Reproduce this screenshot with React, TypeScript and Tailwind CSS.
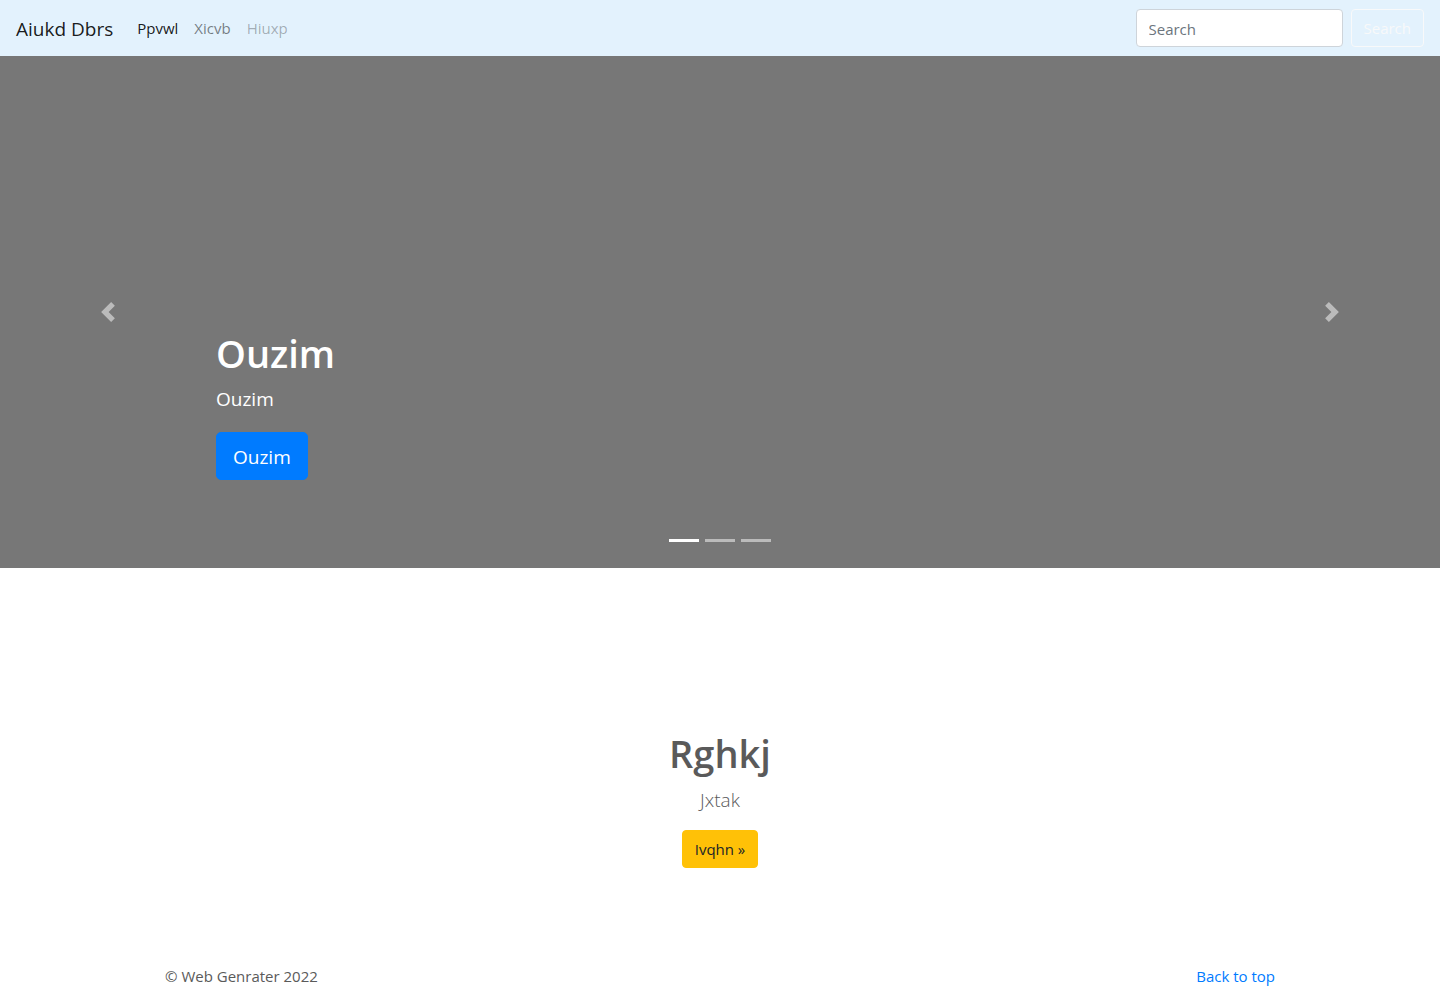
const slides = ["First slide", "Second slide", "Third slide"];

const navLinks = [
  { label: "Ppvwl", color: "text-black/90" },
  { label: "Xicvb", color: "text-black/50" },
  { label: "Hiuxp", color: "text-black/30" },
];

function Navbar() {
  return (
    <header>
      <nav className="flex h-14 items-center bg-[#e3f2fd] px-4" aria-label="Main">
        <a href="#" className="mr-6 pt-0.5 text-[19px] leading-7 text-black/90">Aiukd Dbrs</a>
        <ul className="flex grow gap-4">
          {navLinks.map((link) => (
            <li key={link.label}>
              <a href="#" className={link.color}>{link.label}</a>
            </li>
          ))}
        </ul>
        <form className="flex gap-2">
          <input
            type="search"
            aria-label="Search"
            placeholder="Search"
            className="h-[38px] w-[207px] rounded border border-[#ced4da] bg-white px-3 pt-0.5 text-[#495057] placeholder:text-[#6c757d]"
          />
          <button type="button" className="h-[38px] rounded border border-[#f8f9fa] px-3 text-[#f8f9fa]">Search</button>
        </form>
      </nav>
    </header>
  );
}

function Carousel() {
  return (
    <section className="relative flex h-[512px] flex-col bg-[#777]" aria-label="Highlights">
      <div className="mx-[15%] mt-auto mb-[88px] text-white">
        <h1 className="mb-2.5 text-[38px] leading-[46px] font-semibold">Ouzim</h1>
        <p className="mb-5 text-[19px] leading-[26px]">Ouzim</p>
        <a href="#" className="flex h-12 w-fit items-center rounded-[5px] border border-[#007bff] bg-[#007bff] px-4 pt-0.5 text-[19px]">
          Ouzim
        </a>
      </div>
      <button type="button" aria-label="Previous" className="absolute inset-y-0 left-0 flex w-[15%] items-center justify-center text-white opacity-50">
        <svg className="size-5" viewBox="0 0 8 8" fill="currentColor" aria-hidden="true">
          <path d="M5.25 0l-4 4 4 4 1.5-1.5L4.25 4l2.5-2.5L5.25 0z" />
        </svg>
      </button>
      <button type="button" aria-label="Next" className="absolute inset-y-0 right-0 flex w-[15%] items-center justify-center text-white opacity-50">
        <svg className="size-5" viewBox="0 0 8 8" fill="currentColor" aria-hidden="true">
          <path d="M2.75 0l-1.5 1.5L3.75 4l-2.5 2.5L2.75 8l4-4-4-4z" />
        </svg>
      </button>
      <div className="absolute inset-x-[15%] bottom-[26px] flex justify-center gap-1.5">
        {slides.map((slide, i) => (
          <button
            key={slide}
            type="button"
            aria-label={slide}
            className={i === 0 ? "h-[3px] w-[30px] bg-white" : "h-[3px] w-[30px] bg-white/50"}
          />
        ))}
      </div>
    </section>
  );
}

export default function App() {
  return (
    <div className="bg-white font-['Open_Sans','Noto_Sans',sans-serif] text-[15px] leading-6 text-[#5a5a5a]">
      <Navbar />
      <main>
        <Carousel />
        <section className="flex flex-col items-center px-4 pt-[162px] pb-24 text-center">
          <h2 className="mb-2.5 text-[38px] leading-[46px] font-semibold">Rghkj</h2>
          <p className="mb-4 text-[19px] leading-7 font-light">Jxtak</p>
          <a href="#" className="flex h-[38px] items-center rounded border border-[#ffc107] bg-[#ffc107] px-3 text-[#212529]">
            Ivqhn »
          </a>
        </section>
      </main>
      <footer className="mx-auto flex max-w-[1140px] justify-between px-[15px]">
        <p>© Web Genrater 2022</p>
        <a href="#" className="text-[#007bff]">Back to top</a>
      </footer>
    </div>
  );
}
